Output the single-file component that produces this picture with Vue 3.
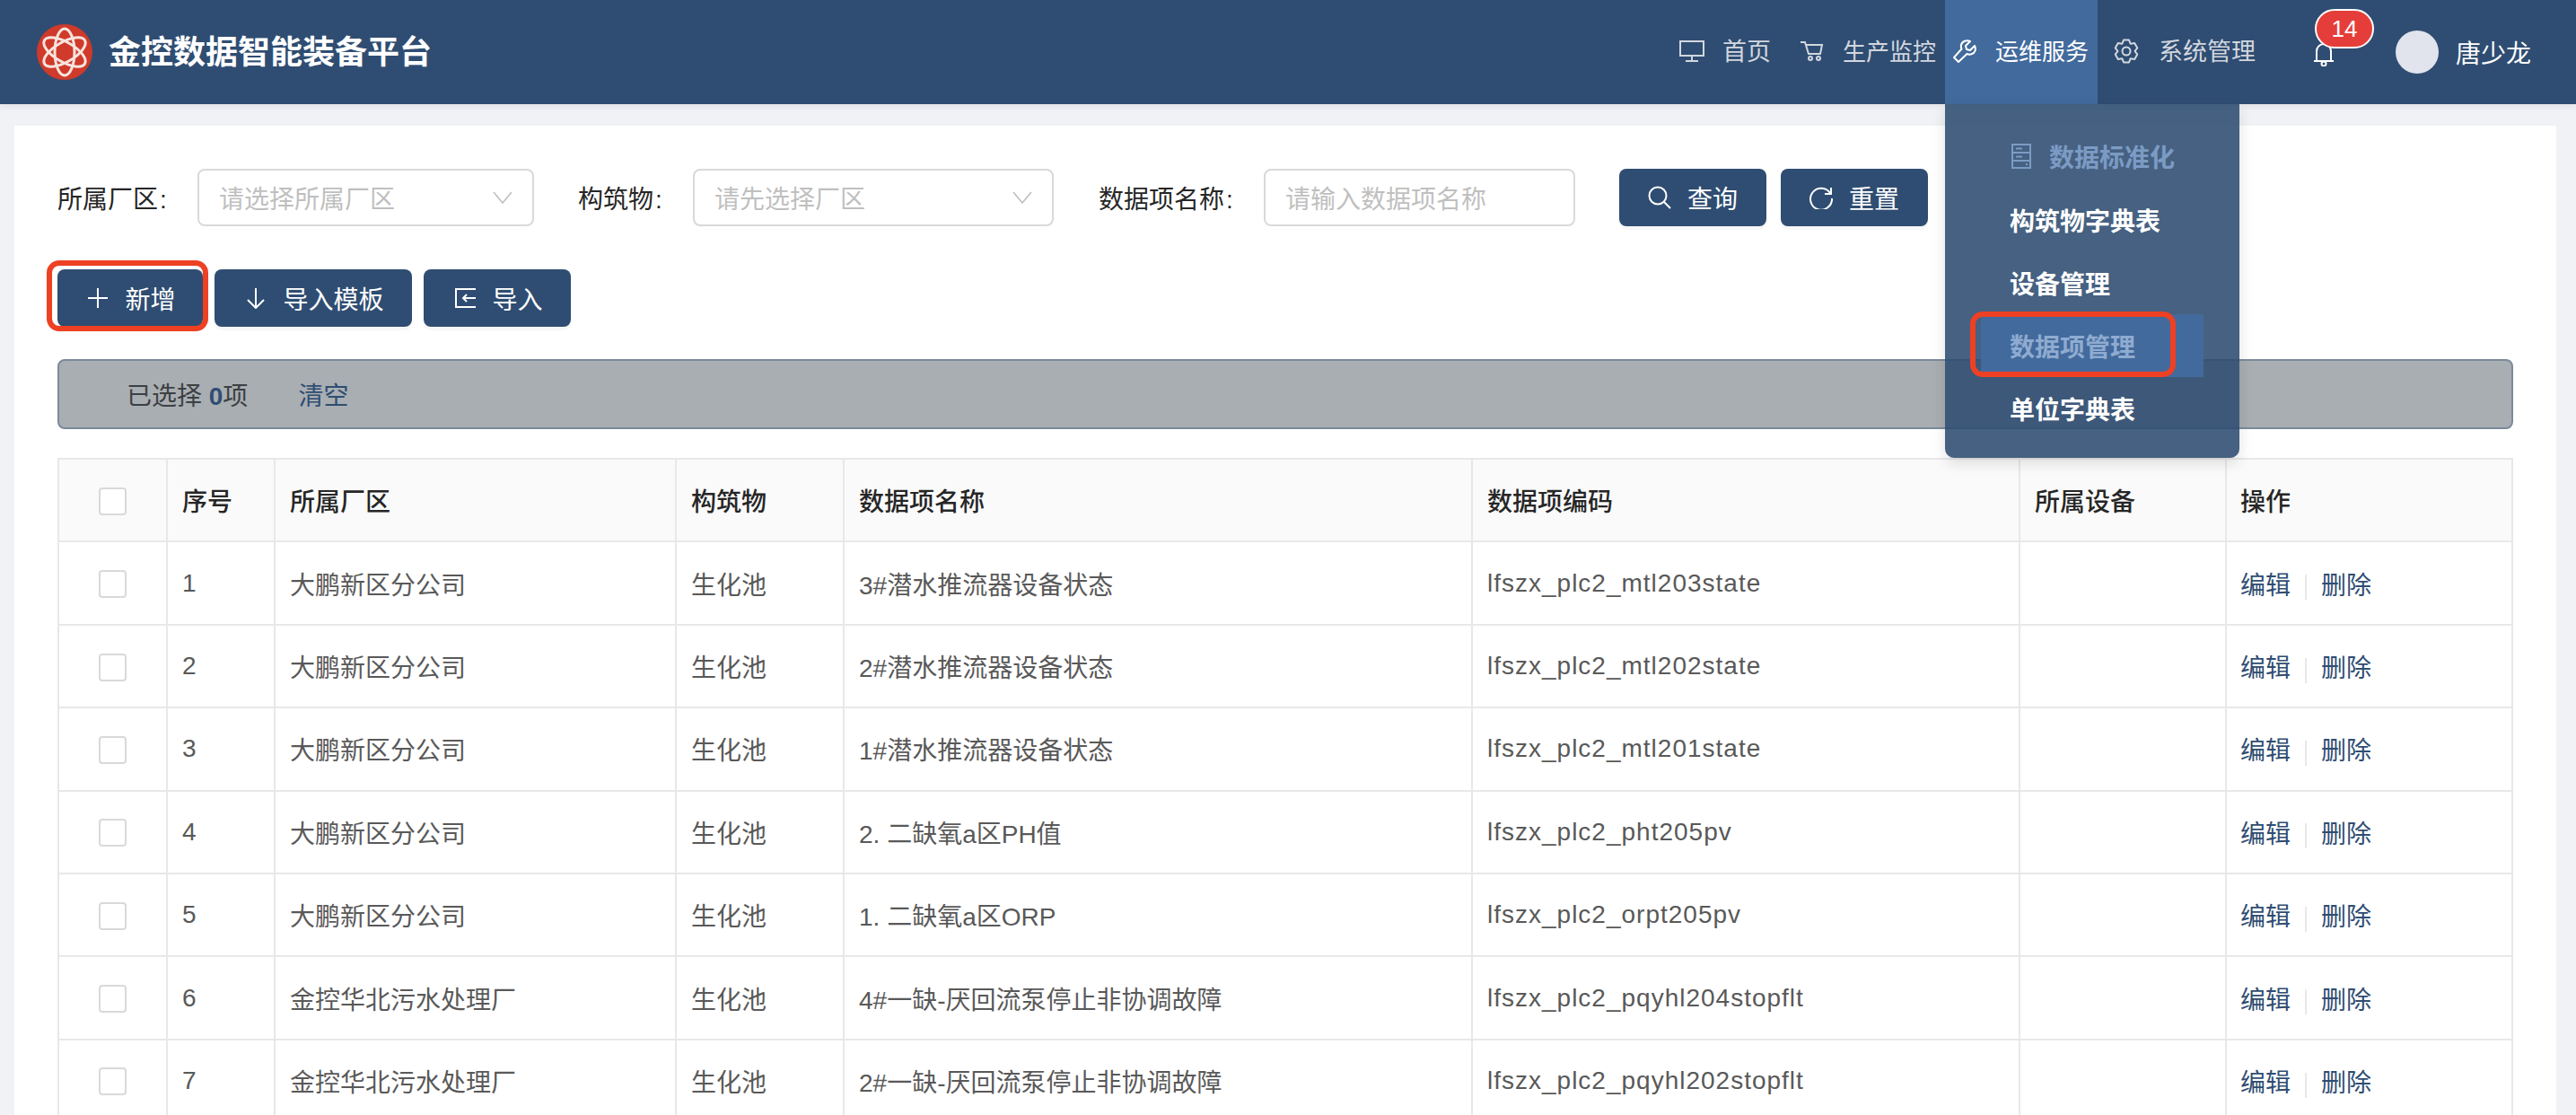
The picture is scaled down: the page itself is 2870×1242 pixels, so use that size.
<script setup>
const rows = [
  { no: 1, plant: '大鹏新区分公司', name: '3#潜水推流器设备状态', code: 'lfszx_plc2_mtl203state' },
  { no: 2, plant: '大鹏新区分公司', name: '2#潜水推流器设备状态', code: 'lfszx_plc2_mtl202state' },
  { no: 3, plant: '大鹏新区分公司', name: '1#潜水推流器设备状态', code: 'lfszx_plc2_mtl201state' },
  { no: 4, plant: '大鹏新区分公司', name: '2. 二缺氧a区PH值', code: 'lfszx_plc2_pht205pv' },
  { no: 5, plant: '大鹏新区分公司', name: '1. 二缺氧a区ORP', code: 'lfszx_plc2_orpt205pv' },
  { no: 6, plant: '金控华北污水处理厂', name: '4#一缺-厌回流泵停止非协调故障', code: 'lfszx_plc2_pqyhl204stopflt' },
  { no: 7, plant: '金控华北污水处理厂', name: '2#一缺-厌回流泵停止非协调故障', code: 'lfszx_plc2_pqyhl202stopflt' },
];

// six lobed gear outline for the settings icon
const gearPath = () => {
  const pts = [];
  for (let i = 0; i < 6; i++) {
    const a = (Math.PI / 3) * i - Math.PI / 2;
    const at = (r, d) => [14 + r * Math.cos(a + d), 14 + r * Math.sin(a + d)].map(n => n.toFixed(1)).join(' ');
    pts.push(at(9.6, -0.5), at(12.8, -0.24), at(12.8, 0.24), at(9.6, 0.5));
  }
  return 'M' + pts.join('L') + 'Z';
};
</script>

<template>
  <div class="page">
    <header class="topbar">
      <div class="brand">
        <svg class="logo" viewBox="0 0 62 62" width="62" height="62">
          <circle cx="31" cy="31" r="31" fill="#cf3a2a" />
          <g fill="none" stroke="#f7e4dd" stroke-width="3">
            <ellipse cx="31" cy="31" rx="11" ry="26" />
            <ellipse cx="31" cy="31" rx="11" ry="26" transform="rotate(60 31 31)" />
            <ellipse cx="31" cy="31" rx="11" ry="26" transform="rotate(120 31 31)" />
          </g>
        </svg>
        <span class="brand-name">金控数据智能装备平台</span>
      </div>

      <nav class="nav">
        <a class="nav-item home">
          <svg viewBox="0 0 28 24" width="28" height="24" fill="none" stroke="currentColor" stroke-width="2">
            <rect x="1" y="1" width="26" height="16" />
            <path d="M14 17v5M7 23h14" />
          </svg>
          <span class="wide">首页</span>
        </a>
        <a class="nav-item">
          <svg viewBox="0 0 28 24" width="28" height="24" fill="none" stroke="currentColor" stroke-width="2">
            <path d="M1 2h5l4 13h13l2-10H7" />
            <circle cx="12" cy="20" r="2" />
            <circle cx="21" cy="20" r="2" />
          </svg>
          <span>生产监控</span>
        </a>
        <div class="nav-item active">
          <svg viewBox="0 0 28 26" width="28" height="26" fill="none" stroke="currentColor" stroke-width="2" stroke-linejoin="round">
            <path d="M25 7l-5 5-4-1-1-4 5-5c-4-2-9 0-10 4-.5 2 0 3.5.5 4.500L2 20l5 5 9.500-9c1 .5 3 1 5 .3 4-1.300 5.500-5.500 3.500-9.300z" />
          </svg>
          <span>运维服务</span>

          <div class="dropdown">
            <div class="drop-head">
              <svg viewBox="0 0 22 28" width="22" height="28" fill="none" stroke="#7c9bc4" stroke-width="2">
                <rect x="1" y="1" width="20" height="26" />
                <path d="M1 10h20M1 19h20M5 5.500h7M5 14.500h7M16 23h2" />
              </svg>
              <span>数据标准化</span>
            </div>
            <a class="drop-item">构筑物字典表</a>
            <a class="drop-item">设备管理</a>
            <a class="drop-item current">
              数据项管理
              <span class="mark mark-menu"></span>
            </a>
            <a class="drop-item">单位字典表</a>
          </div>
        </div>
        <a class="nav-item system">
          <svg viewBox="0 0 28 28" width="28" height="28" fill="none" stroke="currentColor" stroke-width="2" stroke-linejoin="round">
            <path :d="gearPath()" />
            <circle cx="14" cy="14" r="4.500" />
          </svg>
          <span class="wide">系统管理</span>
        </a>
      </nav>

      <div class="notice">
        <svg viewBox="0 0 24 27" width="24" height="27" fill="none" stroke="#fff" stroke-width="2">
          <path d="M4 21V10a8 8 0 0 1 16 0v11M1 21h22" />
          <circle cx="12" cy="24" r="2.500" />
        </svg>
        <span class="badge">14</span>
      </div>
      <div class="avatar"></div>
      <span class="user">唐少龙</span>
    </header>

    <main class="panel">
      <div class="filters">
        <label class="f-label l1">所属厂区<i>:</i></label>
        <div class="field s1">
          <span>请选择所属厂区</span>
          <svg viewBox="0 0 22 14" width="22" height="14" fill="none" stroke="#bfbfbf" stroke-width="1.600"><path d="M1 1l10 12L21 1" /></svg>
        </div>
        <label class="f-label l2">构筑物<i>:</i></label>
        <div class="field s2">
          <span>请先选择厂区</span>
          <svg viewBox="0 0 22 14" width="22" height="14" fill="none" stroke="#bfbfbf" stroke-width="1.600"><path d="M1 1l10 12L21 1" /></svg>
        </div>
        <label class="f-label l3">数据项名称<i>:</i></label>
        <div class="field s3"><span>请输入数据项名称</span></div>
        <button class="btn w164 query">
          <svg viewBox="0 0 26 26" width="26" height="26" fill="none" stroke="#fff" stroke-width="2"><circle cx="11" cy="11" r="9.500" /><path d="M18 18l7 7" /></svg>
          查询
        </button>
        <button class="btn w164">
          <svg viewBox="0 0 26 26" width="26" height="26" fill="none" stroke="#fff" stroke-width="2"><path d="M23 8A12 12 0 1 0 25 14" /><path d="M24 2v7h-7" /></svg>
          重置
        </button>
      </div>

      <div class="toolbar">
        <button class="btn w162">
          <svg viewBox="0 0 24 24" width="24" height="24" fill="none" stroke="#fff" stroke-width="2"><path d="M12 1v22M1 12h22" /></svg>
          新增
          <span class="mark mark-add"></span>
        </button>
        <button class="btn w220">
          <svg viewBox="0 0 24 24" width="24" height="24" fill="none" stroke="#fff" stroke-width="2"><path d="M12 1v22M3 14l9 9 9-9" /></svg>
          导入模板
        </button>
        <button class="btn w164">
          <svg viewBox="0 0 24 24" width="24" height="24" fill="none" stroke="#fff" stroke-width="2"><path d="M24 2H2v20h22M24 12H10M14 8l-4 4 4 4" /></svg>
          导入
        </button>
      </div>

      <div class="selected">
        <span>已选择 <b>0</b>项</span>
        <a>清空</a>
      </div>

      <table class="grid">
        <colgroup>
          <col style="width: 121px" />
          <col style="width: 120px" />
          <col style="width: 447px" />
          <col style="width: 187px" />
          <col style="width: 700px" />
          <col style="width: 610px" />
          <col style="width: 230px" />
          <col />
        </colgroup>
        <thead>
          <tr>
            <th class="check"><span class="box"></span></th>
            <th>序号</th>
            <th>所属厂区</th>
            <th>构筑物</th>
            <th>数据项名称</th>
            <th>数据项编码</th>
            <th>所属设备</th>
            <th class="ops">操作</th>
          </tr>
        </thead>
        <tbody>
          <tr v-for="row in rows" :key="row.no">
            <td class="check"><span class="box"></span></td>
            <td>{{ row.no }}</td>
            <td>{{ row.plant }}</td>
            <td>生化池</td>
            <td>{{ row.name }}</td>
            <td class="code">{{ row.code }}</td>
            <td></td>
            <td class="ops">
              <a>编辑</a><i class="sep"></i><a>删除</a>
            </td>
          </tr>
        </tbody>
      </table>
    </main>
  </div>
</template>

<style>
html, body {
  margin: 0;
  background: #f0f2f5;
  overflow: hidden;
}
</style>

<style scoped>
.page {
  width: 2870px;
  height: 1242px;
  overflow: hidden;
  font-family: "Liberation Sans", "Noto Sans CJK SC", sans-serif;
  font-size: 28px;
  color: #595959;
}

.topbar {
  position: relative;
  z-index: 2;
  height: 116px;
  display: flex;
  align-items: center;
  padding: 0 50px 0 41px;
  background: #2f4d72;
  box-shadow: 0 2px 8px rgba(0, 0, 0, 0.08);
}
.brand {
  display: flex;
  align-items: center;
  gap: 18px;
}
.brand-name {
  margin-bottom: 6px;
  font-size: 36px;
  font-weight: 700;
  color: #fff;
}

.nav {
  display: flex;
  margin-left: auto;
  height: 116px;
}
.nav-item {
  position: relative;
  box-sizing: border-box;
  width: 170px;
  display: flex;
  align-items: center;
  gap: 20px;
  padding-left: 8px;
  font-size: 26px;
  color: #d2d7df;
}
.nav-item > span {
  margin-bottom: 5px;
}
.nav-item > svg {
  margin-bottom: 2px;
}
.nav-item .wide {
  font-size: 27px;
}
.nav-item.home {
  width: 134px;
}
.nav-item.system {
  margin-left: 10px;
  width: 180px;
  gap: 22px;
}
.nav-item.active {
  background: #426a9c;
  color: #fff;
}

.dropdown {
  position: absolute;
  top: 100%;
  left: 0;
  box-sizing: border-box;
  width: 328px;
  height: 394px;
  padding: 21px 40px 0;
  background: rgba(47, 77, 114, 0.89);
  border-radius: 0 0 10px 10px;
  box-shadow: 0 6px 16px rgba(0, 0, 0, 0.12);
  font-size: 28px;
  font-weight: 700;
}
.drop-head {
  height: 73px;
  display: flex;
  align-items: center;
  gap: 20px;
  padding-left: 34px;
  color: #7c9bc4;
}
.drop-item {
  position: relative;
  display: flex;
  align-items: center;
  width: 248px;
  height: 70px;
  padding-left: 32px;
  box-sizing: border-box;
  color: #fff;
}
.drop-item.current {
  background: #426a9c;
  color: #8fabd0;
}

.mark {
  position: absolute;
  box-sizing: border-box;
  border: 6px solid #ee4023;
  border-radius: 14px;
  pointer-events: none;
}
.mark-menu {
  left: -12px;
  top: -3px;
  width: 229px;
  height: 73px;
}
.mark-add {
  left: -12px;
  top: -10px;
  width: 180px;
  height: 79px;
}

.notice {
  position: relative;
  display: flex;
  margin-left: 50px;
  margin-top: 4px;
}
.badge {
  position: absolute;
  left: 2px;
  top: -37px;
  box-sizing: border-box;
  width: 66px;
  height: 44px;
  border: 2px solid #fff;
  border-radius: 22px;
  background: #e53e3a;
  color: #fff;
  font-size: 26px;
  line-height: 40px;
  text-align: center;
}
.avatar {
  width: 48px;
  height: 48px;
  margin-left: 68px;
  border-radius: 50%;
  background: #e1e4ec;
}
.user {
  margin-left: 19px;
  color: #fff;
}

.panel {
  box-sizing: border-box;
  margin: 24px 22px 0 16px;
  height: 1102px;
  padding: 48px;
  background: #fff;
}

.filters {
  display: flex;
  align-items: center;
  height: 64px;
}
.f-label {
  color: #262626;
}
.f-label i {
  margin-left: 2px;
  font-style: normal;
}
.l1 { width: 156px; }
.l2 { width: 128px; margin-left: 49px; }
.l3 { width: 184px; margin-left: 50px; }
.field {
  box-sizing: border-box;
  height: 64px;
  display: flex;
  align-items: center;
  justify-content: space-between;
  padding: 0 22px 0 22px;
  border: 2px solid #d9d9d9;
  border-radius: 8px;
  color: #bfbfbf;
}
.s1 { width: 375px; }
.s2 { width: 402px; }
.s3 { width: 347px; }

.btn {
  position: relative;
  box-sizing: border-box;
  height: 64px;
  display: inline-flex;
  align-items: center;
  justify-content: center;
  gap: 18px;
  padding: 0;
  border: 0;
  border-radius: 8px;
  background: #2f4d72;
  box-shadow: 0 4px 0 rgba(0, 0, 0, 0.03);
  color: #fff;
  font: inherit;
}
.w162 { width: 162px; }
.w164 { width: 164px; }
.w220 { width: 220px; }
.query { margin-left: 49px; margin-right: 16px; }

.toolbar {
  display: flex;
  gap: 13px;
  margin-top: 48px;
}
.toolbar .btn {
  padding-left: 3px;
}

.selected {
  box-sizing: border-box;
  height: 78px;
  display: flex;
  align-items: center;
  gap: 56px;
  margin-top: 36px;
  padding-left: 75px;
  border: 2px solid #7b8a9c;
  border-radius: 8px;
  background: #a9aeb2;
  color: #3c4043;
}
.selected b {
  color: #2f4d72;
}
.selected a {
  color: #2f4d72;
}

.grid {
  width: 2736px;
  margin-top: 32px;
  table-layout: fixed;
  border-collapse: collapse;
}
.grid th,
.grid td {
  height: 92.4px;
  padding: 0 0 0 16px;
  border: 2px solid #e8e8e8;
  text-align: left;
  font-weight: 400;
  box-sizing: border-box;
}
.grid th {
  background: #fafafa;
  color: #262626;
  font-weight: 500;
}
.grid .check {
  padding: 0;
  text-align: center;
}
.grid .code {
  letter-spacing: 1px;
}
.grid .ops {
  padding-left: 15px;
}
.box {
  display: inline-block;
  width: 31px;
  height: 31px;
  box-sizing: border-box;
  border: 2px solid #d9d9d9;
  border-radius: 4px;
  background: #fff;
  vertical-align: middle;
}
.ops a {
  color: #2f4d72;
}
.sep {
  display: inline-block;
  width: 2px;
  height: 28px;
  margin: 0 16px;
  background: #e8e8e8;
  vertical-align: middle;
}
</style>
